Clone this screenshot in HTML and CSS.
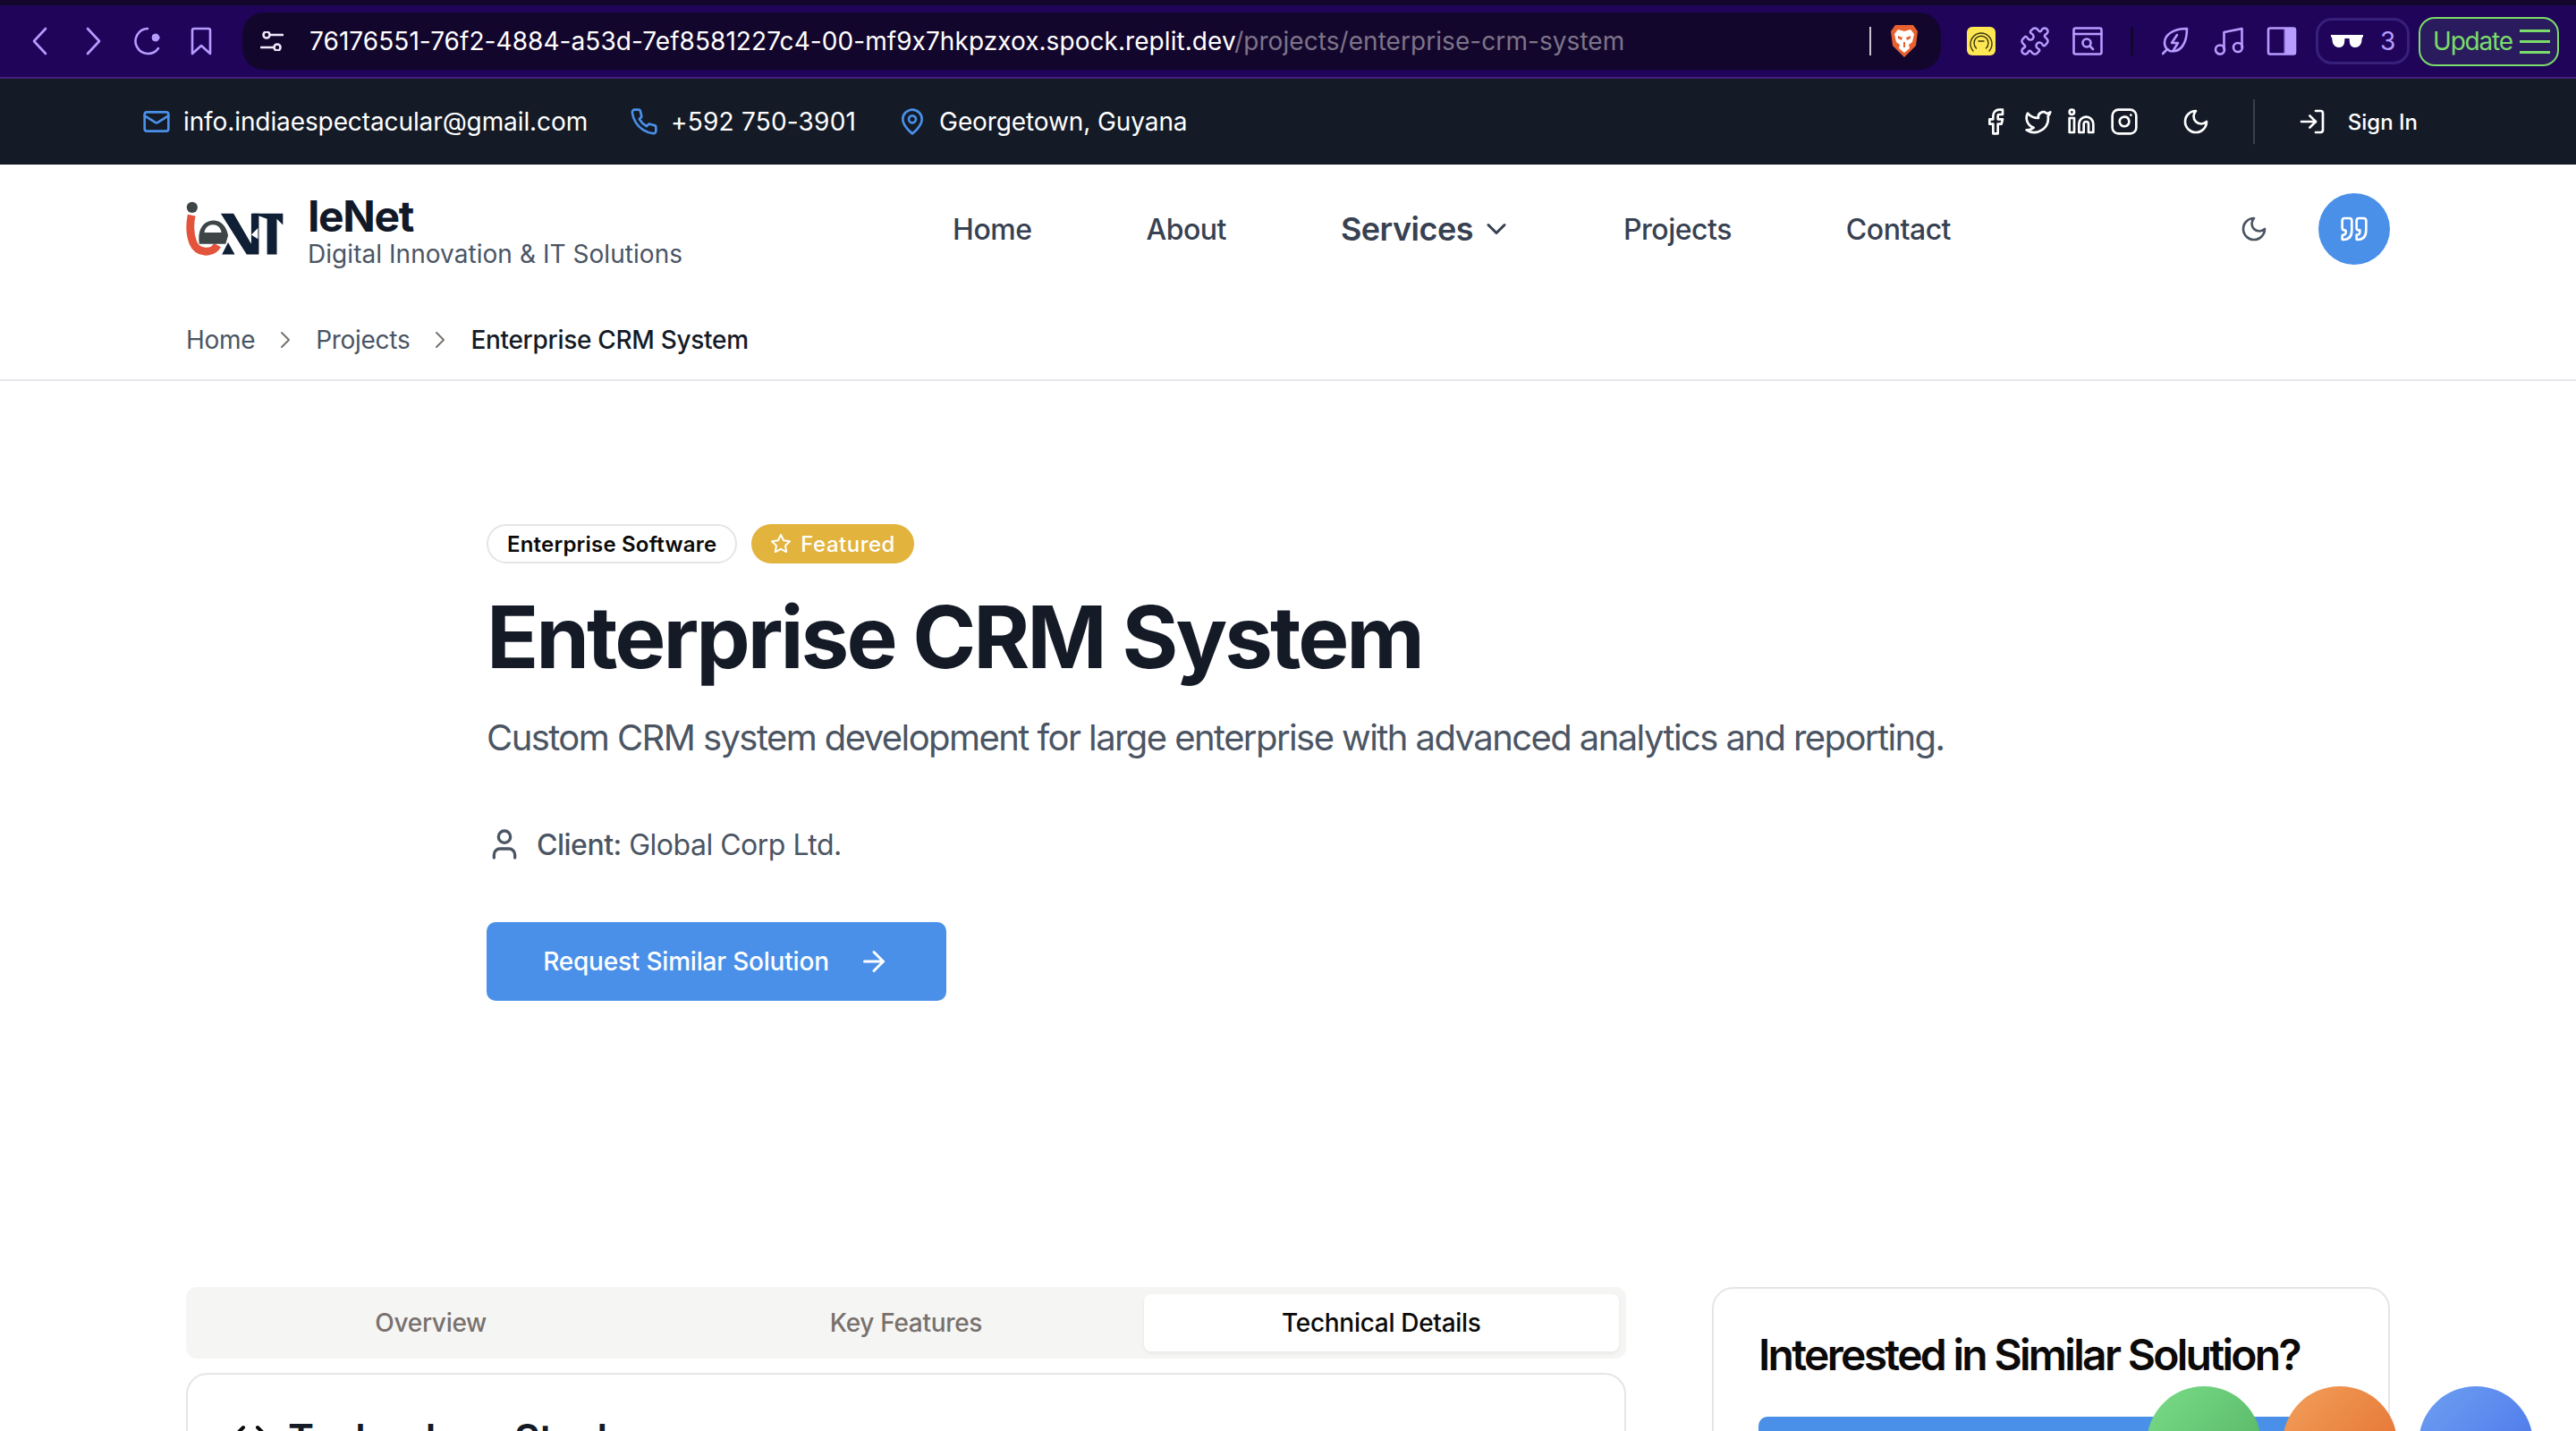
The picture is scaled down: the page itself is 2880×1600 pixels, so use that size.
FILE: index.html
```html
<!DOCTYPE html>
<html lang="en">
<head>
    <meta charset="UTF-8">
    <meta name="viewport" content="width=device-width, initial-scale=1.0">
    <title>Enterprise CRM System - IeNet</title>
    <link rel="stylesheet" href="styles.css">
</head>
<body>
    <!-- browser chrome -->
    <div class="browser-bar">
        <svg class="tb-back" viewBox="0 0 18 32"><path d="M16 2 3 16l13 14"/></svg>
        <svg class="tb-forward" viewBox="0 0 18 32"><path d="M2 2l13 14L2 30"/></svg>
        <svg class="tb-reload" viewBox="0 0 32 32"><path d="M18 2a14 14 0 1 0 12 22"/><circle class="tb-solid" cx="27" cy="12" r="4"/></svg>
        <svg class="tb-bookmark" viewBox="0 0 24 32"><path d="M2 30V4a2 2 0 0 1 2-2h16a2 2 0 0 1 2 2v26l-10-9z"/></svg>
        <div class="address">
            <svg class="addr-sliders" viewBox="0 0 26 22"><circle cx="7" cy="4" r="3.5"/><path d="M11 4h14M1 18h14"/><circle cx="19" cy="18" r="3.5"/></svg>
            <span class="addr-text">76176551-76f2-4884-a53d-7ef8581227c4-00-mf9x7hkpzxox.spock.replit.dev<span class="addr-path">/projects/enterprise-crm-system</span></span>
            <span class="addr-cursor"></span>
            <svg class="brave" viewBox="0 0 32 38">
                <path fill="#ea6130" d="M6 1h20l5 7-2 16-13 13L3 24 1 8z"/>
                <path fill="#fff" d="M9 6l7 2 7-2 4 5-2 9-4 3 1 4-6 5-6-5 1-4-4-3-2-9z"/>
                <path fill="#ea6130" d="M9 13l5 2-1 3-4-2zM23 13l-5 2 1 3 4-2zM15 20h2v6h-2z"/>
            </svg>
        </div>
        <div class="tb-right">
            <div class="tb-cell">
                <svg class="ext-yellow" viewBox="0 0 32 32"><rect class="ext-bg" width="32" height="32" rx="6"/><path d="M7 27a12 12 0 1 1 18 0"/><path d="M10.500 24a8 8 0 1 1 11 0"/><path d="M13 16h1.500M15.300 16h1.500M17.500 16H19"/></svg>
            </div>
            <div class="tb-cell">
                <svg class="tb-icon tb-puzzle" viewBox="1 1 22 22"><path d="M19.439 7.85c-.049.322.059.648.289.878l1.568 1.568c.47.47.706 1.087.706 1.704s-.235 1.233-.706 1.704l-1.611 1.611a.98.98 0 0 1-.837.276c-.47-.07-.802-.48-.968-.925a2.501 2.501 0 1 0-3.214 3.214c.446.166.855.497.925.968a.979.979 0 0 1-.276.837l-1.61 1.61a2.404 2.404 0 0 1-1.705.707 2.402 2.402 0 0 1-1.704-.706l-1.568-1.568a1.026 1.026 0 0 0-.877-.29c-.493.074-.84.504-1.02.968a2.5 2.5 0 1 1-3.237-3.237c.464-.18.894-.527.967-1.02a1.026 1.026 0 0 0-.289-.877l-1.568-1.568A2.402 2.402 0 0 1 1.998 12c0-.617.236-1.234.706-1.704L4.23 8.77c.24-.24.581-.353.917-.303.515.077.877.528 1.073 1.01a2.5 2.5 0 1 0 3.259-3.259c-.482-.196-.933-.558-1.01-1.073-.05-.336.062-.676.303-.917l1.525-1.525A2.402 2.402 0 0 1 12 1.998c.617 0 1.234.236 1.704.706l1.568 1.568c.23.23.556.338.877.29.493-.074.84-.504 1.02-.968a2.5 2.5 0 1 1 3.237 3.237c-.464.18-.894.527-.967 1.02Z"/></svg>
            </div>
            <div class="tb-cell">
                <svg class="tb-icon" viewBox="0 0 34 32"><rect x="1.500" y="1.500" width="31" height="29" rx="2"/><path d="M1.500 8h31"/><circle cx="16" cy="18" r="4.500"/><path d="M19.500 21.500 23 25"/></svg>
            </div>
            <div class="tb-sep"></div>
            <div class="tb-cell">
                <svg class="tb-leaf" viewBox="0 0 30 32"><path d="M28 2C14 2 3 8 3 18c0 4 2 7 6 9 12 2 19-8 19-25z"/><path d="M1 30l5-5"/><path d="M17 9l-6 9h7l-5 8"/></svg>
            </div>
            <div class="tb-cell">
                <svg class="tb-icon" viewBox="0 0 33 32"><path d="M11 25V6l20-4v21"/><circle cx="6.500" cy="25.500" r="5"/><circle cx="26.500" cy="23" r="5"/></svg>
            </div>
            <div class="tb-cell">
                <svg class="tb-icon" viewBox="0 0 33 32"><rect x="1.500" y="1.500" width="30" height="29" rx="2"/><rect class="tb-solid" x="20" y="1.500" width="11.500" height="29"/></svg>
            </div>
            <div class="shields">
                <svg class="glasses" viewBox="0 0 36 16"><path d="M0 1h36v2.500h-1L34 10c-1 3-4 5-7 5s-5.500-2-6-5l-.5-5h-5l-.5 5c-.5 3-3 5-6 5s-6-2-7-5L1 3.500H0z"/></svg>
                <span>3</span>
            </div>
            <div class="update">
                <span>Update</span>
                <div class="update-lines"><i></i><i></i><i></i></div>
            </div>
        </div>
    </div>

    <!-- site top bar -->
    <div class="topbar">
        <div class="contact-list">
            <div class="contact-item">
                <svg class="icon icon-blue" viewBox="0 0 24 24"><rect x="2" y="4" width="20" height="16" rx="2"/><path d="m22 7-8.970 5.700a1.940 1.940 0 0 1-2.060 0L2 7"/></svg>
                info.indiaespectacular@gmail.com
            </div>
            <div class="contact-item contact-phone">
                <svg class="icon icon-blue" viewBox="0 0 24 24"><path d="M22 16.920v3a2 2 0 0 1-2.180 2 19.790 19.790 0 0 1-8.630-3.070 19.500 19.500 0 0 1-6-6 19.790 19.790 0 0 1-3.070-8.670A2 2 0 0 1 4.110 2h3a2 2 0 0 1 2 1.720 12.840 12.840 0 0 0 .7 2.810 2 2 0 0 1-.45 2.110L8.090 9.910a16 16 0 0 0 6 6l1.270-1.270a2 2 0 0 1 2.110-.45 12.840 12.840 0 0 0 2.810.7A2 2 0 0 1 22 16.920z"/></svg>
                +592 750-3901
            </div>
            <div class="contact-item">
                <svg class="icon icon-blue" viewBox="0 0 24 24"><path d="M20 10c0 6-8 12-8 12s-8-6-8-12a8 8 0 0 1 16 0Z"/><circle cx="12" cy="10" r="3"/></svg>
                Georgetown, Guyana
            </div>
        </div>
        <div class="topbar-right">
            <div class="social-list">
                <svg class="icon" viewBox="0 0 24 24"><path d="M18 2h-3a5 5 0 0 0-5 5v3H7v4h3v8h4v-8h3l1-4h-4V7a1 1 0 0 1 1-1h3z"/></svg>
                <svg class="icon" viewBox="0 0 24 24"><path d="M22 4s-.7 2.100-2 3.400c1.600 10-9.400 17.300-18 11.600 2.200.1 4.400-.6 6-2C3 15.500.5 9.600 3 5c2.200 2.600 5.600 4.100 9 4-.9-4.200 4-6.600 7-3.800 1.100 0 3-1.200 3-1.200z"/></svg>
                <svg class="icon" viewBox="0 0 24 24"><path d="M16 8a6 6 0 0 1 6 6v7h-4v-7a2 2 0 0 0-2-2 2 2 0 0 0-2 2v7h-4v-7a6 6 0 0 1 6-6z"/><rect x="2" y="9" width="4" height="12"/><circle cx="4" cy="4" r="2"/></svg>
                <svg class="icon" viewBox="0 0 24 24"><rect x="2" y="2" width="20" height="20" rx="5"/><path d="M16 11.370A4 4 0 1 1 12.630 8 4 4 0 0 1 16 11.370z"/><path d="M17.500 6.500h.01"/></svg>
            </div>
            <svg class="icon topbar-moon" viewBox="0 0 24 24"><path d="M12 3a6 6 0 0 0 9 9 9 9 0 1 1-9-9Z"/></svg>
            <div class="topbar-divider"></div>
            <div class="sign-in">
                <svg class="icon" viewBox="0 0 24 24"><path d="M15 3h4a2 2 0 0 1 2 2v14a2 2 0 0 1-2 2h-4"/><path d="m10 17 5-5-5-5"/><path d="M15 12H3"/></svg>
                Sign In
            </div>
        </div>
    </div>

    <!-- site header -->
    <header class="site-nav">
        <div class="brand">
            <svg class="logo" viewBox="33 30 318 182">
                <circle fill="#3e4547" cx="52" cy="50" r="18"/>
                <path fill="none" stroke="#e4533c" stroke-width="26" d="M50 76c-6 30-6 62 5 90 14 34 62 40 80 8"/>
                <path fill="#3e4547" d="M75 165c-6-44 16-72 47-72 28 0 44 24 48 50l-8 27H75z"/>
                <path fill="#fff" d="M92 133h56c-2-16-12-26-28-26-15 0-26 10-28 26z"/>
                <path fill="#0f1f35" d="M146 70h42l58 100V70h25v135h-40zM150 205l20-40 22 40z"/>
                <path fill="#0f1f35" d="M250 70h100v38l-20-20v117h-32V88z"/>
                <path fill="#fff" d="M246 140l22-22v36z"/>
            </svg>
            <div class="brand-text">
                <div class="brand-name">IeNet</div>
                <div class="brand-tag">Digital Innovation &amp; IT Solutions</div>
            </div>
        </div>
        <nav class="nav-links">
            <a>Home</a>
            <a>About</a>
            <a class="nav-active">Services <svg class="icon nav-chevron" viewBox="0 0 24 24"><path d="m6 9 6 6 6-6"/></svg></a>
            <a>Projects</a>
            <a>Contact</a>
        </nav>
        <div class="nav-actions">
            <svg class="icon nav-moon" viewBox="0 0 24 24"><path d="M12 3a6 6 0 0 0 9 9 9 9 0 1 1-9-9Z"/></svg>
            <div class="quote-btn">
                <svg class="icon" viewBox="0 0 24 24"><path d="M3 21c3 0 7-1 7-8V5c0-1.250-.756-2.017-2-2H4c-1.250 0-2 .75-2 1.972V11c0 1.250.75 2 2 2 1 0 1 0 1 1v1c0 1-1 2-2 2s-1 .008-1 1.031V20c0 1 0 1 1 1z"/><path d="M15 21c3 0 7-1 7-8V5c0-1.250-.757-2.017-2-2h-4c-1.250 0-2 .75-2 1.972V11c0 1.250.75 2 2 2h.75c0 2.250.25 4-2.750 4v3c0 1 0 1 1 1z"/></svg>
            </div>
        </div>
    </header>

    <div class="breadcrumb">
        <span>Home</span>
        <svg class="icon crumb-sep" viewBox="0 0 24 24"><path d="m9 18 6-6-6-6"/></svg>
        <span>Projects</span>
        <svg class="icon crumb-sep" viewBox="0 0 24 24"><path d="m9 18 6-6-6-6"/></svg>
        <span class="crumb-current">Enterprise CRM System</span>
    </div>

    <!-- hero -->
    <section class="hero">
        <div class="badges">
            <span class="badge badge-outline">Enterprise Software</span>
            <span class="badge badge-featured">
                <svg class="icon badge-star" viewBox="0 0 24 24"><path d="M12 2l3.090 6.260L22 9.270l-5 4.870 1.180 6.880L12 17.770l-6.180 3.250L7 14.140 2 9.270l6.910-1.010z"/></svg>
                Featured
            </span>
        </div>
        <h1>Enterprise CRM System</h1>
        <p class="hero-desc">Custom CRM system development for large enterprise with advanced analytics and reporting.</p>
        <div class="client">
            <svg class="icon client-icon" viewBox="0 0 24 24"><path d="M19 21v-2a4 4 0 0 0-4-4H9a4 4 0 0 0-4 4v2"/><circle cx="12" cy="7" r="4"/></svg>
            <span><strong>Client:</strong> Global Corp Ltd.</span>
        </div>
        <a class="cta">
            Request Similar Solution
            <svg class="icon cta-arrow" viewBox="0 0 24 24"><path d="M5 12h14"/><path d="m12 5 7 7-7 7"/></svg>
        </a>
    </section>

    <!-- details -->
    <section class="details">
        <div class="details-main">
            <div class="tabs">
                <div class="tab">Overview</div>
                <div class="tab">Key Features</div>
                <div class="tab tab-active">Technical Details</div>
            </div>
            <div class="card tech-card">
                <h2>
                    <svg class="icon tech-icon" viewBox="0 0 24 24"><path d="m16 18 6-6-6-6"/><path d="m8 6-6 6 6 6"/></svg>
                    Technology Stack
                </h2>
            </div>
        </div>
        <aside class="card side-card">
            <h3>Interested in Similar Solution?</h3>
            <a class="side-btn"></a>
        </aside>
    </section>

    <!-- floating contact buttons -->
    <div class="float-btns">
        <div class="float-btn float-green">
            <svg class="icon" viewBox="0 0 24 24"><path d="M3 21l1.650-3.800a9 9 0 1 1 3.400 2.900L3 21"/></svg>
        </div>
        <div class="float-btn float-orange"></div>
        <div class="float-btn float-blue"></div>
    </div>
</body>
</html>
```

FILE: styles.css
```css
* {
    box-sizing: border-box;
}
html, body {
    margin: 0;
    height: 1600px;
    overflow: hidden;
}
body {
    font-family: Inter, "Liberation Sans", sans-serif;
    background-color: #fff;
    color: #141b27;
}
svg {
    display: block;
    flex-shrink: 0;
}
.icon {
    width: 32px;
    height: 32px;
    fill: none;
    stroke: currentColor;
    stroke-width: 2;
    stroke-linecap: round;
    stroke-linejoin: round;
}

/* browser chrome */
.browser-bar {
    height: 88px;
    padding: 0 19px 0 35px;
    display: flex;
    align-items: center;
    background: #20045a;
    border-top: 6px solid #13062d;
    border-bottom: 2px solid #44207a;
    color: #b79cff;
}
.browser-bar svg {
    fill: none;
    stroke: #b79cff;
    stroke-width: 2.6;
    stroke-linecap: round;
    stroke-linejoin: round;
}
.browser-bar .tb-solid {
    fill: #b79cff;
    stroke-width: 1;
}
.tb-back, .tb-forward {
    width: 18px;
    height: 32px;
}
.tb-forward {
    margin-left: 43px;
}
.tb-reload {
    width: 32px;
    height: 32px;
    margin-left: 33px;
}
.tb-bookmark {
    width: 24px;
    height: 32px;
    margin-left: 34px;
}
.address {
    width: 1899px;
    height: 64px;
    margin-left: 34px;
    padding-left: 20px;
    display: flex;
    align-items: center;
    background: #13062d;
    border-radius: 24px;
    position: relative;
}
.browser-bar .addr-sliders {
    width: 26px;
    height: 22px;
    stroke: #eee8f8;
}
.addr-text {
    margin-left: 29px;
    font-size: 28px;
    letter-spacing: 0.06px;
    color: #fff;
    white-space: nowrap;
}
.addr-path {
    color: #7d7488;
}
.addr-cursor {
    position: absolute;
    left: 1819px;
    top: 16px;
    width: 2px;
    height: 32px;
    background: #c9c4d2;
}
.browser-bar .brave {
    position: absolute;
    left: 1842px;
    top: 13px;
    width: 32px;
    height: 38px;
    stroke: none;
}
.tb-right {
    margin-left: 28px;
    display: flex;
    align-items: center;
    gap: 25.5px;
}
.tb-cell {
    width: 34px;
    height: 32px;
    display: flex;
    justify-content: center;
}
.tb-icon {
    width: 34px;
    height: 32px;
}
.browser-bar .tb-puzzle {
    stroke-width: 1.7;
}
.tb-leaf {
    width: 30px;
    height: 32px;
}
.browser-bar .ext-yellow {
    width: 32px;
    height: 32px;
    stroke: #3a3410;
    stroke-width: 1.4;
}
.browser-bar .ext-yellow .ext-bg {
    fill: #fde752;
    stroke: none;
}
.tb-sep {
    width: 13px;
    height: 32px;
    display: flex;
    justify-content: center;
}
.tb-sep::before {
    content: "";
    width: 3px;
    background: #13062d;
}
.shields {
    width: 105px;
    height: 52px;
    margin-left: -4.5px;
    padding-left: 14px;
    display: flex;
    align-items: center;
    gap: 19px;
    border: 3px solid #37207a;
    border-radius: 18px;
    font-size: 28px;
}
.browser-bar .glasses {
    width: 36px;
    height: 16px;
    fill: #fff;
    stroke: none;
}
.update {
    width: 157px;
    height: 55px;
    margin-left: -15.5px;
    padding-left: 14px;
    display: flex;
    align-items: center;
    gap: 8px;
    border: 2.5px solid #7bdc6a;
    border-radius: 18px;
    background: #2a1b5e;
    color: #7bdc6a;
    font-size: 28px;
    letter-spacing: -1.2px;
}
.update-lines {
    width: 34px;
    display: flex;
    flex-direction: column;
    gap: 9px;
}
.update-lines i {
    height: 3px;
    background: #7bdc6a;
}

/* site top bar */
.topbar {
    height: 96px;
    padding: 0 177px 0 159px;
    display: flex;
    align-items: center;
    justify-content: space-between;
    background-color: #141b27;
    color: #fff;
    font-size: 28px;
}
.contact-list {
    display: flex;
    gap: 47px;
    letter-spacing: -0.1px;
}
.contact-item {
    display: flex;
    align-items: center;
    gap: 14px;
}
.contact-phone {
    letter-spacing: 0.2px;
}
.icon-blue {
    color: #4a90e9;
}
.topbar-right {
    display: flex;
    align-items: center;
}
.social-list {
    display: flex;
    gap: 16px;
}
.topbar-moon {
    margin-left: 48px;
}
.topbar-divider {
    width: 2px;
    height: 50px;
    margin-left: 48px;
    background: #3a404b;
}
.sign-in {
    margin-left: 48px;
    display: flex;
    align-items: center;
    gap: 24px;
    font-size: 24px;
    font-weight: 500;
}

/* site header */
.site-nav {
    height: 144px;
    padding: 0 208px;
    display: flex;
    align-items: center;
}
.brand {
    display: flex;
    align-items: center;
    gap: 27px;
}
.logo {
    width: 109px;
    height: 62px;
}
.brand-text {
    padding-top: 8px;
}
.brand-name {
    font-size: 48px;
    font-weight: 700;
    line-height: 48px;
    color: #111827;
    letter-spacing: -1.4px;
}
.brand-tag {
    font-size: 28px;
    line-height: 36px;
    letter-spacing: 0.05px;
    color: #4b5563;
}
.nav-links {
    display: flex;
    align-items: center;
    gap: 128px;
    margin-left: 302px;
    font-size: 32px;
    font-weight: 500;
    letter-spacing: -0.5px;
    color: #374151;
}
.nav-links a {
    display: flex;
    align-items: center;
    gap: 8px;
}
.nav-links .nav-active {
    font-size: 36px;
    font-weight: 600;
}
.nav-chevron {
    width: 36px;
    height: 36px;
    margin-right: -4px;
}
.nav-actions {
    margin-left: auto;
    display: flex;
    align-items: center;
    gap: 56px;
    color: #4b5563;
}
.nav-moon {
    width: 32px;
    height: 32px;
}
.quote-btn {
    width: 80px;
    height: 80px;
    display: flex;
    align-items: center;
    justify-content: center;
    border-radius: 50%;
    background: #4a90e9;
    color: #fff;
}

/* breadcrumb */
.breadcrumb {
    height: 98px;
    padding: 8px 208px 0;
    display: flex;
    align-items: center;
    gap: 18px;
    border-bottom: 2px solid #e5e7eb;
    font-size: 28px;
    letter-spacing: -0.3px;
    color: #4b5563;
}
.crumb-sep {
    width: 32px;
    height: 32px;
    stroke-width: 1.5;
    color: #78716c;
}
.crumb-current {
    color: #141b27;
    font-weight: 500;
}

/* hero */
.hero {
    padding: 160px 544px 320px;
}
.badges {
    display: flex;
    gap: 16px;
}
.badge {
    height: 44px;
    padding: 0 21px;
    display: flex;
    align-items: center;
    gap: 10px;
    border-radius: 22px;
    font-size: 24px;
    font-weight: 600;
    letter-spacing: 0.2px;
}
.badge-outline {
    border: 2px solid #e7e5e4;
    color: #0c0a09;
}
.badge-featured {
    background: #e2b33d;
    color: #fff;
    font-weight: 500;
    letter-spacing: 0.5px;
}
.badge-star {
    width: 24px;
    height: 24px;
}
h1 {
    margin: 34px 0 0;
    font-size: 96px;
    line-height: 96px;
    font-weight: 700;
    letter-spacing: -3px;
    white-space: nowrap;
}
.hero-desc {
    margin: 37px 0 0;
    font-size: 40px;
    line-height: 56px;
    letter-spacing: -1.58px;
    color: #4b5563;
    white-space: nowrap;
}
.client {
    margin-top: 71px;
    display: flex;
    align-items: center;
    gap: 16px;
    font-size: 32px;
    letter-spacing: -0.5px;
    color: #4b5563;
}
.client-icon {
    width: 40px;
    height: 40px;
}
.client strong {
    font-weight: 500;
}
.cta {
    width: 514px;
    height: 88px;
    margin-top: 67px;
    display: flex;
    align-items: center;
    justify-content: center;
    gap: 32px;
    border-radius: 10px;
    background: #4a90e9;
    color: #fff;
    font-size: 28px;
    font-weight: 500;
    letter-spacing: -0.2px;
}
.cta-arrow {
    width: 36px;
    height: 36px;
}

/* details */
.details {
    padding: 0 208px;
    display: grid;
    grid-template-columns: 1610px 1fr;
    gap: 96px;
}
.tabs {
    height: 80px;
    padding: 8px;
    display: grid;
    grid-template-columns: repeat(3, 1fr);
    background-color: #f5f5f4;
    border-radius: 12px;
    margin-bottom: 16px;
}
.tab {
    display: flex;
    align-items: center;
    justify-content: center;
    border-radius: 8px;
    font-size: 28px;
    font-weight: 500;
    letter-spacing: -0.3px;
    color: #78716c;
}
.tab-active {
    background: #fff;
    color: #0c0a09;
    box-shadow: 0 2px 4px rgba(0, 0, 0, 0.06);
}
.card {
    background: #fff;
    border: 2.500px solid #e7e5e4;
    border-radius: 24px;
}
.tech-card {
    padding: 47px 46px;
    height: 400px;
}
.tech-card h2 {
    margin: 0;
    display: flex;
    align-items: center;
    gap: 18px;
    font-size: 44px;
    line-height: 48px;
    font-weight: 600;
    letter-spacing: -0.7px;
}
.tech-icon {
    width: 48px;
    height: 48px;
    color: #0c0a09;
}
.side-card {
    padding: 46px 50px;
    height: 500px;
}
.side-card h3 {
    margin: 0 0 41px;
    font-size: 48px;
    line-height: 56px;
    font-weight: 600;
    letter-spacing: -2.7px;
    color: #0c0a09;
    white-space: nowrap;
}
.side-btn {
    display: block;
    height: 88px;
    background: #4a90e9;
    border-radius: 10px;
}

/* floating buttons */
.float-btns {
    position: fixed;
    top: 1550px;
    right: 48px;
    display: flex;
    gap: 24px;
}
.float-btn {
    width: 128px;
    height: 128px;
    padding-top: 48px;
    display: flex;
    justify-content: center;
    border-radius: 50%;
    color: #fff;
}
.float-green {
    background: linear-gradient(135deg, #7adc88, #4fae5f);
}
.float-orange {
    background: linear-gradient(135deg, #f2a05b, #e2692a);
}
.float-blue {
    background: linear-gradient(135deg, #6f9ff2, #4470e8);
}
```
